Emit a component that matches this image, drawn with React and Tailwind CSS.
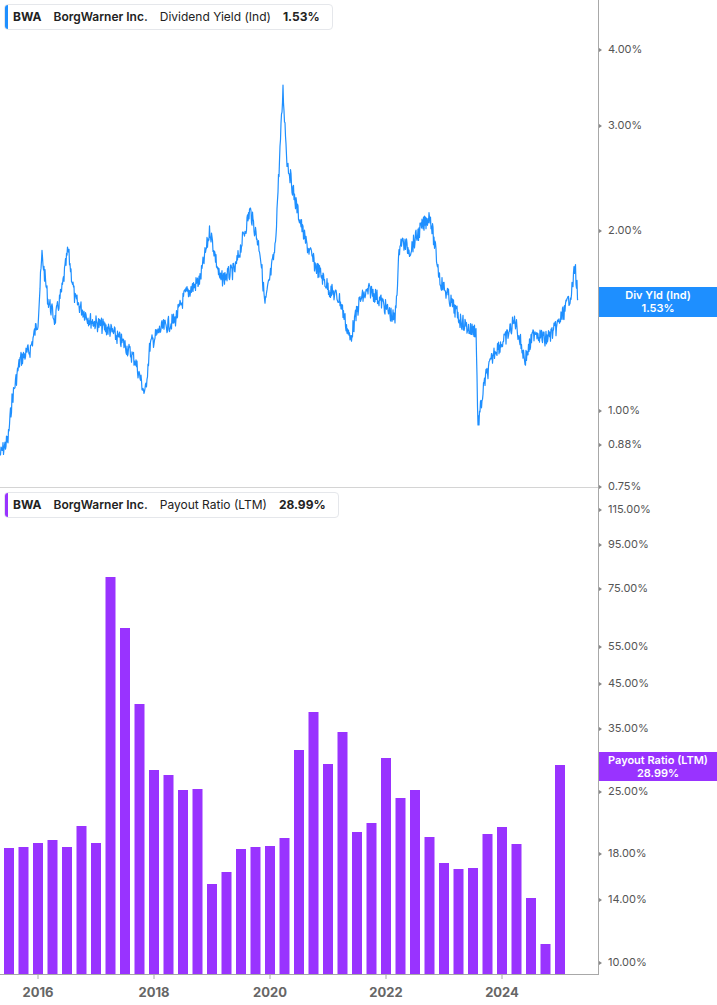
import React from "react";

const pts = [[0,455],[8,440],[12,400],[20,360],[30,350],[38,320],[42,255],[48,300],[55,320],[62,290],[68,250],[75,300],[90,320],[110,330],[125,345],[135,360],[145,395],[150,345],[160,330],[175,320],[185,295],[200,280],[210,230],[220,280],[235,270],[250,210],[260,250],[265,305],[275,250],[280,150],[283,90],[287,160],[295,200],[305,240],[315,265],[330,290],[340,300],[350,340],[360,300],[370,290],[380,300],[395,320],[400,240],[410,250],[420,230],[430,215],[440,280],[450,300],[460,320],[470,330],[476,330],[478,425],[485,380],[495,350],[505,340],[515,320],[525,360],[535,330],[545,340],[555,330],[565,310],[572,290],[575,265],[578,300]];

function buildLine() {
  let seed = 7;
  const rnd = () => { seed = (seed * 9301 + 49297) % 233280; return seed / 233280; };
  const out = [];
  for (let i = 0; i < pts.length - 1; i++) {
    const [x0, y0] = pts[i], [x1, y1] = pts[i + 1];
    const n = Math.max(1, Math.round((x1 - x0) * 2));
    for (let k = 0; k < n; k++) {
      const t = k / n;
      const y = y0 + (y1 - y0) * t + (rnd() - 0.5) * 16;
      out.push(`${(x0 + (x1 - x0) * t).toFixed(1)},${y.toFixed(1)}`);
    }
  }
  out.push("578,300");
  return out.join(" ");
}
const line = buildLine();

const bars = [848,847,843,840,847,826,843,577,628,704,770,775,790,789,884,872,849,847,846,838,750,712,764,732,832,823,758,798,790,837,863,869,868,834,827,844,898,944,765];

const topTicks = [["4.00%",50],["3.00%",126],["2.00%",231],["1.00%",411],["0.88%",445],["0.75%",487]];
const botTicks = [["115.00%",510],["95.00%",545],["75.00%",589],["55.00%",647],["45.00%",684],["35.00%",729],["25.00%",792],["18.00%",854],["14.00%",900],["10.00%",963]];
const years = [["2016",38],["2018",154],["2020",270],["2022",386],["2024",502]];

function Legend({ color, label, value, top }) {
  return (
    <div className="absolute left-1 flex items-center gap-3 rounded border border-gray-200 bg-white pl-2 pr-3 h-[26px] text-[12px] text-[#222]" style={{ top }}>
      <div className="absolute left-0 top-0 bottom-0 w-[3px] rounded-l" style={{ background: color }} />
      <span className="font-bold">BWA</span>
      <span className="font-semibold">BorgWarner Inc.</span>
      <span>{label}</span>
      <span className="font-bold">{value}</span>
    </div>
  );
}

export default function App() {
  return (
    <div className="relative w-[717px] h-[1005px] bg-white overflow-hidden" style={{ fontFamily: "Inter, 'Liberation Sans', sans-serif" }}>
      <svg className="absolute left-0 top-0" width="717" height="1005">
        <line x1="0" y1="487.5" x2="598" y2="487.5" stroke="#d4d4d4" />
        <line x1="598.5" y1="0" x2="598.5" y2="975" stroke="#a8a8a8" />
        <line x1="0" y1="974.5" x2="599" y2="974.5" stroke="#a8a8a8" />
        {[...topTicks, ...botTicks].map(([l, y]) => (
          <path key={l} d={`M599 ${y - 2}L602 ${y}L599 ${y + 2}Z`} fill="#888" />
        ))}
        {years.map(([l, x]) => <line key={l} x1={x} y1="975" x2={x} y2="979" stroke="#a8a8a8" />)}
        <polyline points={line} fill="none" stroke="#1e8fff" strokeWidth="1.2" strokeLinejoin="round" />
        {bars.map((t, i) => (
          <rect key={i} x={4 + i * 14.5} y={t} width="10" height={974 - t} fill="#9933ff" />
        ))}
      </svg>
      <Legend color="#1e8fff" label="Dividend Yield (Ind)" value="1.53%" top={4} />
      <Legend color="#9933ff" label="Payout Ratio (LTM)" value="28.99%" top={492} />
      {[...topTicks, ...botTicks].map(([l, y]) => (
        <div key={l} className="absolute left-[608px] text-[11px] text-[#555] leading-none" style={{ top: y - 6 }}>{l}</div>
      ))}
      {years.map(([l, x]) => (
        <div key={l} className="absolute w-12 text-center text-[13px] font-bold text-[#666]" style={{ left: x - 24, top: 983 }}>{l}</div>
      ))}
      <div className="absolute left-[599px] top-[287px] w-[118px] h-[30px] bg-[#1e8fff] text-white text-[11px] font-semibold leading-[13px] flex flex-col items-center justify-center">
        <span>Div Yld (Ind)</span><span>1.53%</span>
      </div>
      <div className="absolute left-[599px] top-[752px] w-[118px] h-[29px] bg-[#9933ff] text-white text-[11px] font-semibold leading-[13px] flex flex-col items-center justify-center">
        <span>Payout Ratio (LTM)</span><span>28.99%</span>
      </div>
    </div>
  );
}
